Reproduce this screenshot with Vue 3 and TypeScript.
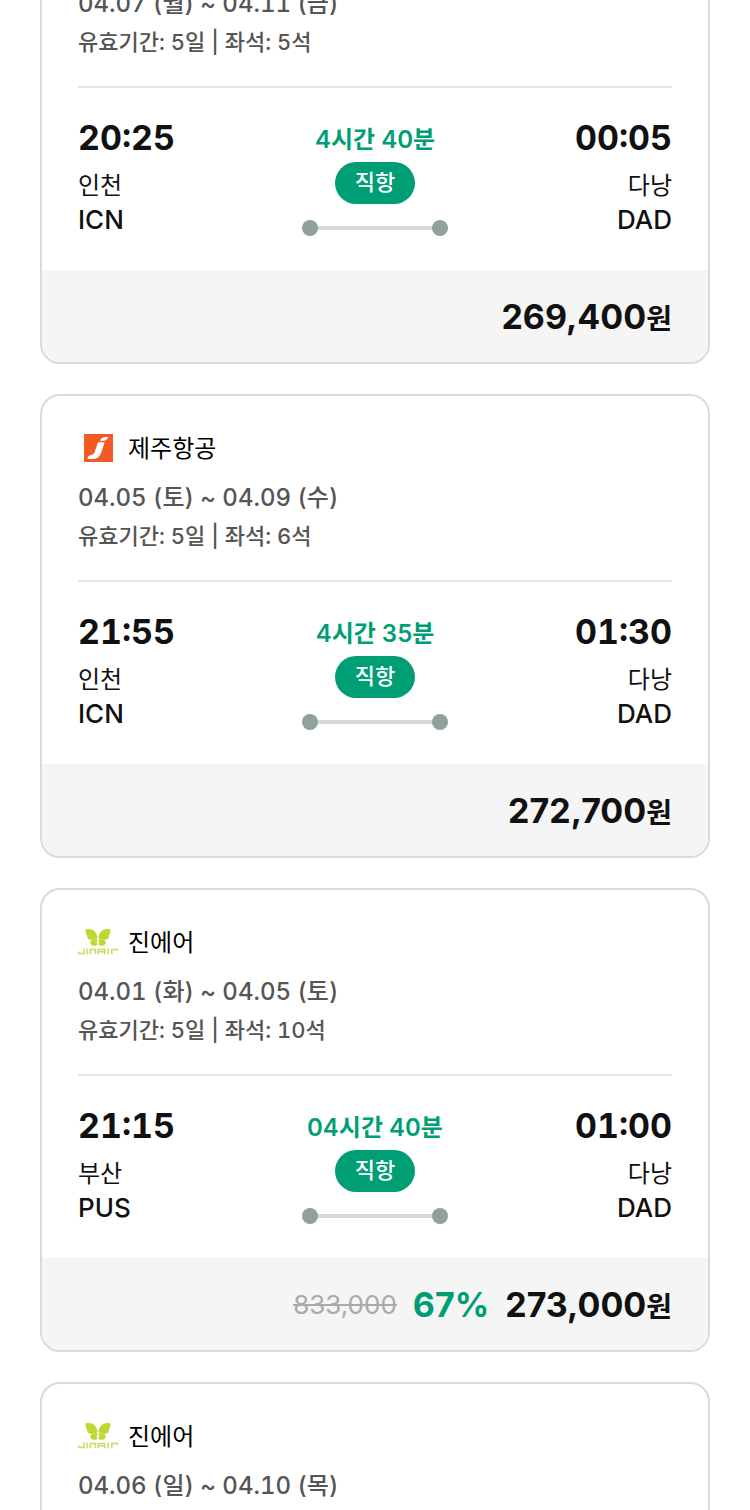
<script setup lang="ts">
type Airline = 'jeju' | 'jin'

interface Stop {
  time: string
  city: string
  code: string
}

interface Fare {
  id: number
  airline: Airline
  dates: string
  validity: string
  duration: string
  from: Stop
  to: Stop
  original?: string
  discount?: string
  price: string
}

const airlineNames: Record<Airline, string> = {
  jeju: '제주항공',
  jin: '진에어',
}

const fares: Fare[] = [
  {
    id: 1,
    airline: 'jeju',
    dates: '04.07 (월) ~ 04.11 (금)',
    validity: '유효기간: 5일 | 좌석: 5석',
    duration: '4시간 40분',
    from: { time: '20:25', city: '인천', code: 'ICN' },
    to: { time: '00:05', city: '다낭', code: 'DAD' },
    price: '269,400',
  },
  {
    id: 2,
    airline: 'jeju',
    dates: '04.05 (토) ~ 04.09 (수)',
    validity: '유효기간: 5일 | 좌석: 6석',
    duration: '4시간 35분',
    from: { time: '21:55', city: '인천', code: 'ICN' },
    to: { time: '01:30', city: '다낭', code: 'DAD' },
    price: '272,700',
  },
  {
    id: 3,
    airline: 'jin',
    dates: '04.01 (화) ~ 04.05 (토)',
    validity: '유효기간: 5일 | 좌석: 10석',
    duration: '04시간 40분',
    from: { time: '21:15', city: '부산', code: 'PUS' },
    to: { time: '01:00', city: '다낭', code: 'DAD' },
    original: '833,000',
    discount: '67%',
    price: '273,000',
  },
  {
    id: 4,
    airline: 'jin',
    dates: '04.06 (일) ~ 04.10 (목)',
    validity: '유효기간: 5일 | 좌석: 10석',
    duration: '04시간 40분',
    from: { time: '21:15', city: '부산', code: 'PUS' },
    to: { time: '01:00', city: '다낭', code: 'DAD' },
    price: '273,000',
  },
]
</script>

<template>
  <main class="page">
    <ul class="list">
      <li v-for="fare in fares" :key="fare.id" class="card">
        <div class="body">
          <header class="airline">
            <svg v-if="fare.airline === 'jeju'" class="logo" viewBox="0 0 40 40" aria-hidden="true">
              <rect x="6" y="6" width="29" height="28" fill="#f15a24" />
              <path d="M21.8 12.8Q23.6 9.4 28 9.1H30.4Q29 12.8 25.4 12.8Z" fill="#fff" />
              <path d="M20 14.2H26.6L23.2 24.8Q21 31 15 31H9.4Q10 27.6 12.8 27.3Q15.6 27.1 16.6 24.2Z" fill="#fff" />
            </svg>
            <svg v-else class="logo" viewBox="0 0 40 40" aria-hidden="true">
              <g fill="#bfd730">
                <path d="M8 7.2C13.5 5.8 19 9 19.6 16C17.9 17.4 14.2 18.4 11.4 17.6C9.2 16.6 9 14.6 8.9 12.9C7.6 11.4 7 9 8 7.2Z" />
                <path d="M32 7.2C26.5 5.8 21 9 20.4 16C22.1 17.4 25.8 18.4 28.6 17.6C30.8 16.6 31 14.6 31.1 12.9C32.4 11.4 33 9 32 7.2Z" />
                <path d="M19.4 17.4C17 17.2 12.6 18 12.2 20.4C12.3 23.4 17.8 25 19.2 22.8C19.5 21.4 19.5 20.8 18 20.5C19 20 19.6 19 19.4 17.4Z" />
                <path d="M20.6 17.4C23 17.2 27.4 18 27.8 20.4C27.7 23.4 22.2 25 20.8 22.8C20.5 21.4 20.5 20.8 22 20.5C21 20 20.4 19 20.6 17.4Z" />
              </g>
              <g class="wordmark">
                <path d="M.5 29.5V31.5H6V26.6" />
                <path d="M9 26.6V32.2M30.2 26.6V32.2" />
                <path d="M12.3 32.2V27.4H17.5V32.2" />
                <path d="M20.3 32.2V27.4H26.8V32.2M20.3 29.7H26.8" />
                <path d="M33.8 32.2V27.4H39.5V29" />
              </g>
            </svg>
            <h2 class="name">{{ airlineNames[fare.airline] }}</h2>
          </header>
          <p class="meta">{{ fare.dates }}</p>
          <p class="meta validity">{{ fare.validity }}</p>
          <div class="trip">
            <div class="stop">
              <strong class="time">{{ fare.from.time }}</strong>
              <span class="city">{{ fare.from.city }}</span>
              <span class="code">{{ fare.from.code }}</span>
            </div>
            <div class="route">
              <span class="duration">{{ fare.duration }}</span>
              <span class="direct">직항</span>
              <span class="track"></span>
            </div>
            <div class="stop end">
              <strong class="time">{{ fare.to.time }}</strong>
              <span class="city">{{ fare.to.city }}</span>
              <span class="code">{{ fare.to.code }}</span>
            </div>
          </div>
        </div>
        <footer class="fare">
          <del v-if="fare.original" class="original">{{ fare.original }}</del>
          <span v-if="fare.discount" class="discount">{{ fare.discount }}</span>
          <strong class="price">{{ fare.price }}<span class="won">원</span></strong>
        </footer>
      </li>
    </ul>
  </main>
</template>

<style>
body {
  margin: 0;
  background: #fff;
}
</style>

<style scoped>
.page {
  height: 100vh;
  overflow: hidden;
  font-family: Inter, 'Noto Sans CJK KR', sans-serif;
  color: #111;
}

.list {
  display: flex;
  flex-direction: column;
  gap: 30px;
  margin: -100px 0 0;
  padding: 0 40px;
  list-style: none;
}

.card {
  flex: none;
  overflow: hidden;
  border: 2px solid #d9dbdb;
  border-radius: 20px;
}

.body {
  padding: 32px 36px 33px;
}

.airline {
  display: flex;
  align-items: flex-start;
  gap: 10px;
  height: 40px;
  margin-bottom: 11px;
}

.logo {
  flex: none;
  width: 40px;
  height: 40px;
}

.wordmark {
  fill: none;
  stroke: #cbdc5c;
  stroke-width: 1.5;
}

.name {
  margin: 0;
  font-size: 24px;
  font-weight: 400;
  line-height: 42px;
  color: #000;
}

.meta {
  margin: 0;
  font-size: 24px;
  font-weight: 500;
  line-height: 38px;
  font-variant-numeric: tabular-nums;
  color: #555;
}

.validity {
  font-size: 22px;
}

.trip {
  display: grid;
  grid-template-columns: 1fr auto 1fr;
  margin-top: 25px;
  padding-top: 28px;
  border-top: 2px solid #e5e5e5;
}

.stop {
  display: flex;
  flex-direction: column;
  align-items: flex-start;
}

.end {
  align-items: flex-end;
}

.time {
  margin-bottom: 8px;
  font-size: 34px;
  font-weight: 700;
  line-height: 44px;
  font-variant-numeric: tabular-nums;
}

.city {
  font-size: 24px;
  line-height: 35px;
}

.code {
  font-size: 26px;
  font-weight: 500;
  line-height: 34px;
}

.route {
  display: flex;
  flex-direction: column;
  align-items: center;
  padding-top: 5px;
}

.duration {
  font-size: 24px;
  font-weight: 600;
  line-height: 38px;
  color: #009e74;
}

.direct {
  margin: 3px 0 16px;
  padding: 0 20px 2px;
  border-radius: 21px;
  background: #009e74;
  font-size: 22px;
  font-weight: 500;
  line-height: 40px;
  color: #fff;
}

.track {
  display: flex;
  align-items: center;
  justify-content: space-between;
  width: 146px;
  height: 16px;
  background: linear-gradient(#d5dad8, #d5dad8) center / 130px 4px no-repeat;
}

.track::before,
.track::after {
  content: '';
  width: 16px;
  height: 16px;
  border-radius: 50%;
  background: #90a09a;
}

.fare {
  display: flex;
  align-items: center;
  justify-content: flex-end;
  gap: 16px;
  height: 92px;
  padding: 0 36px;
  background: #f5f5f5;
}

.original {
  font-size: 26px;
  color: #aaa;
}

.discount,
.price {
  font-size: 34px;
  font-weight: 700;
}

.discount {
  color: #009e74;
}

.won {
  font-size: 28px;
}
</style>
